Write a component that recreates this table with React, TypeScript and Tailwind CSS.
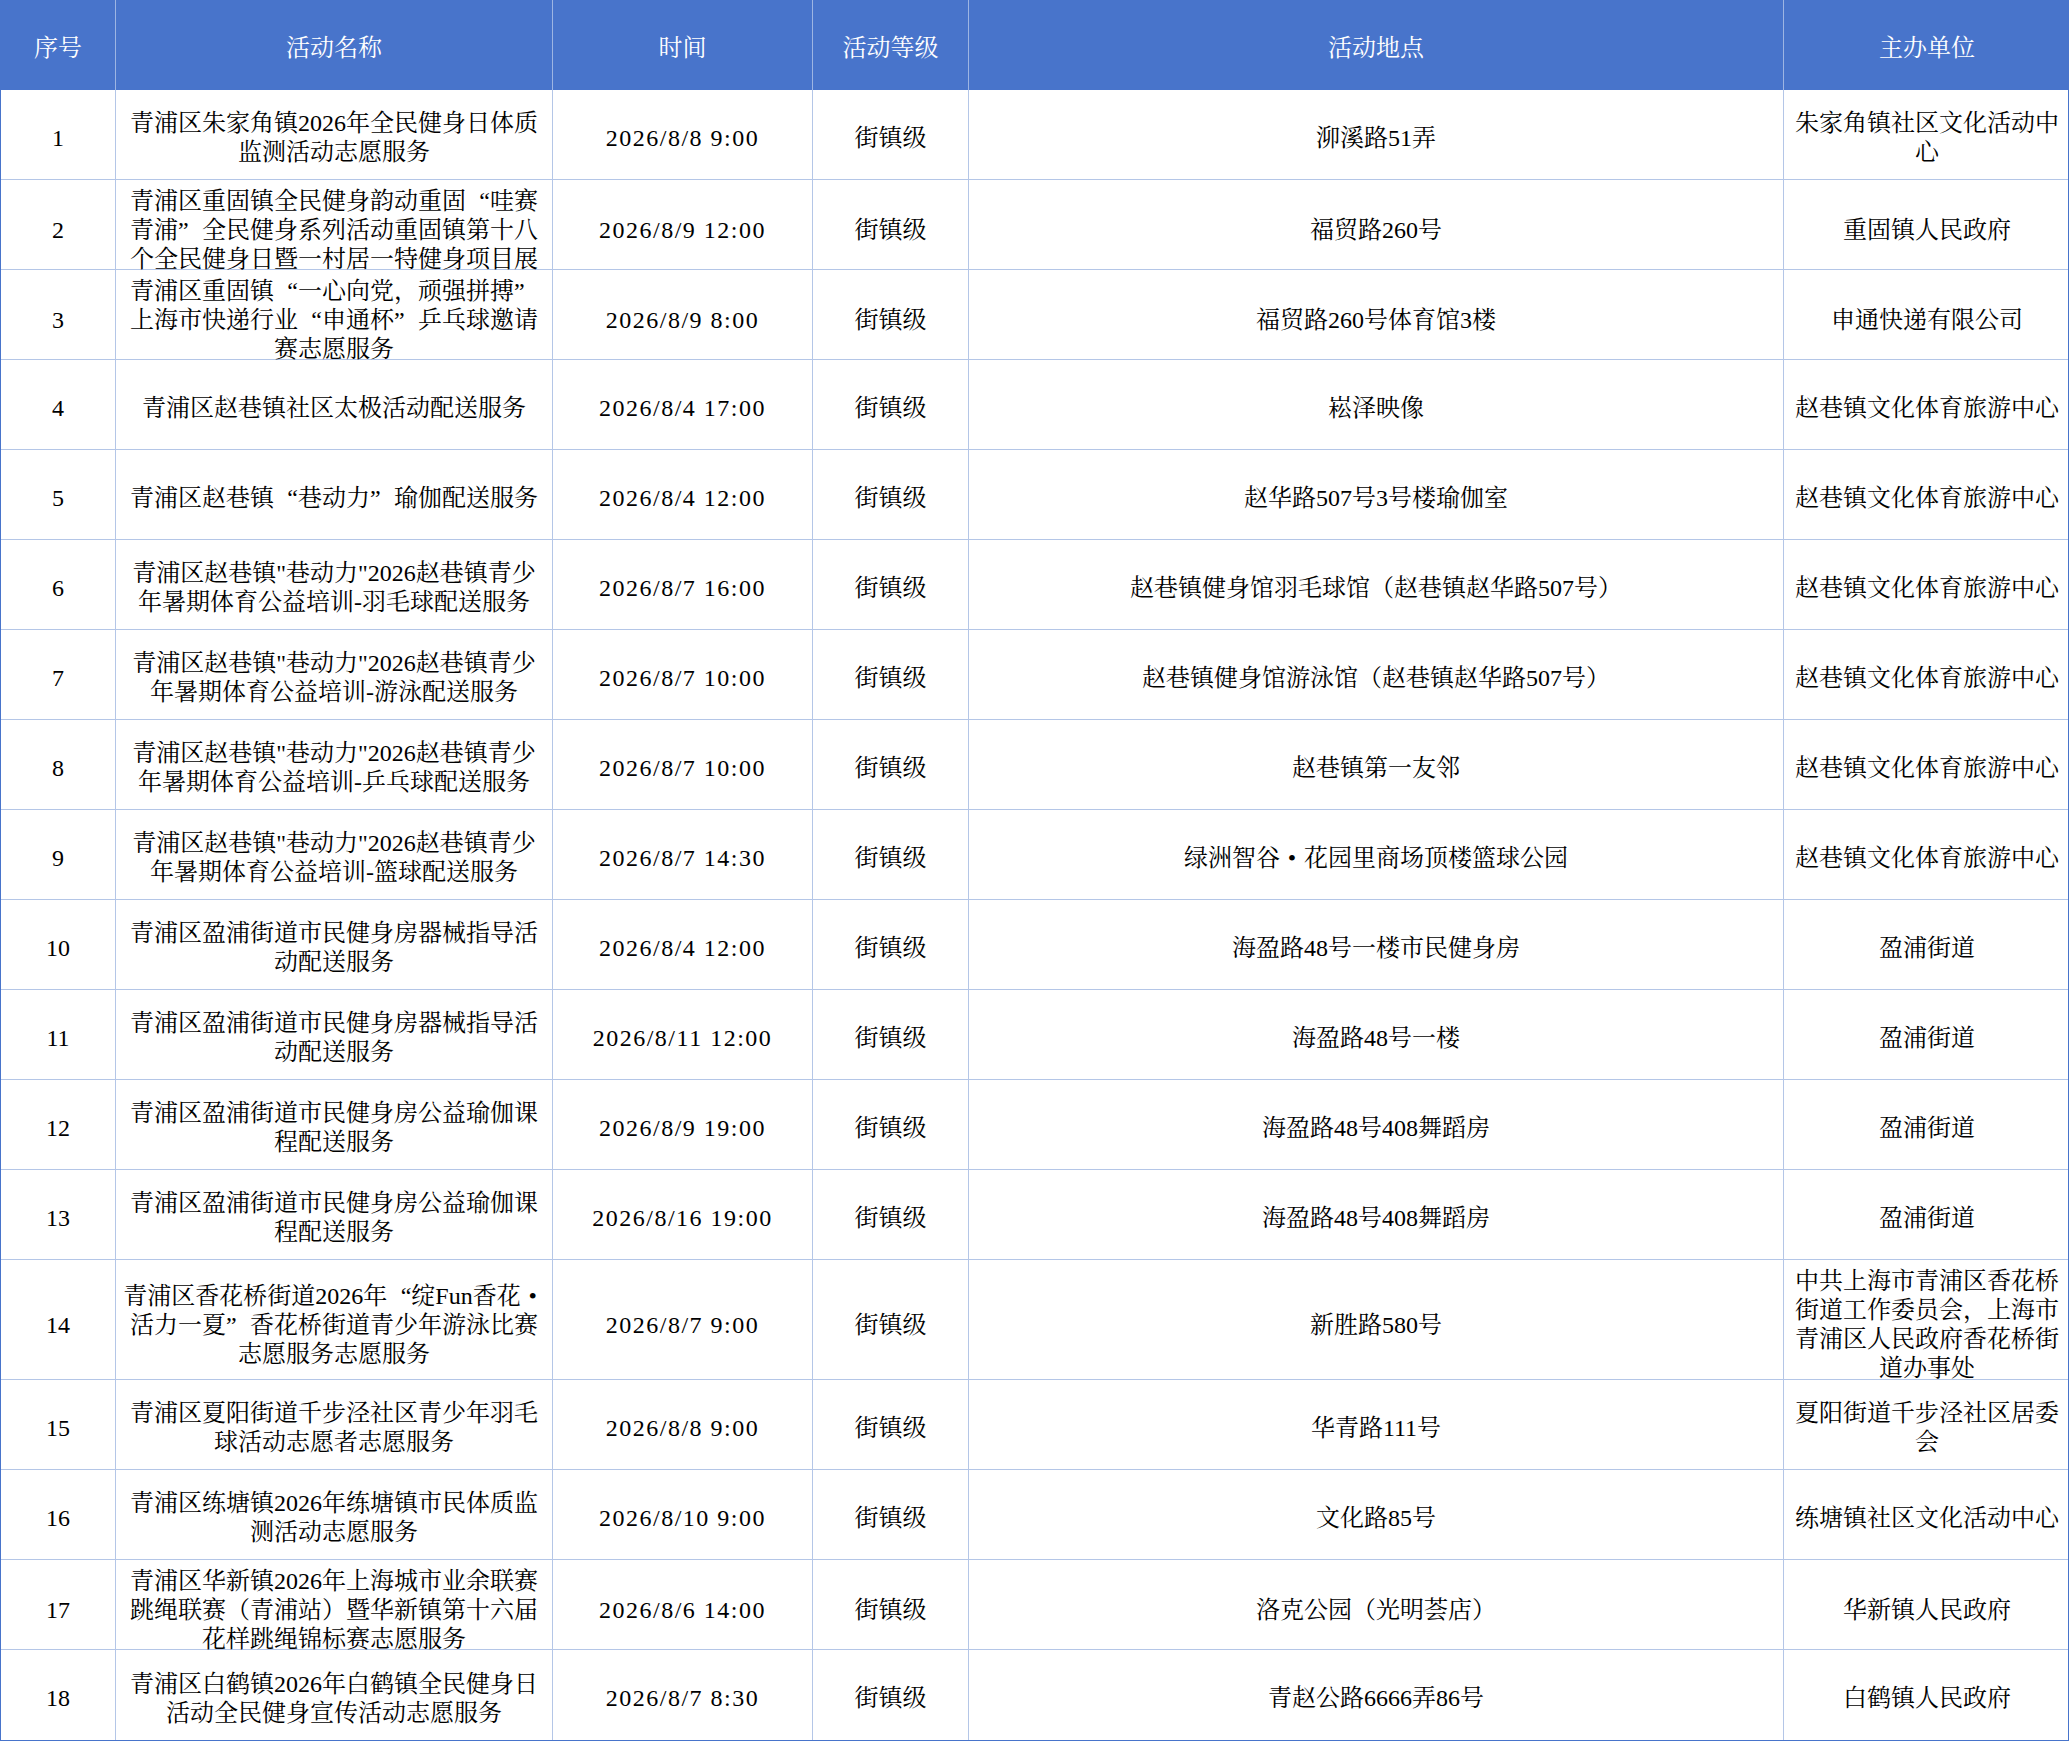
import React from "react";

type Row = {
  no: number;
  name: string[];
  time: string;
  place: string[];
  org: string[];
  tall?: boolean;
};

const rows: Row[] = [
  { no: 1, name: ["青浦区朱家角镇2026年全民健身日体质", "监测活动志愿服务"], time: "2026/8/8 9:00", place: ["泖溪路51弄"], org: ["朱家角镇社区文化活动中", "心"] },
  { no: 2, name: ["青浦区重固镇全民健身韵动重固“哇赛", "青浦”全民健身系列活动重固镇第十八", "个全民健身日暨一村居一特健身项目展"], time: "2026/8/9 12:00", place: ["福贸路260号"], org: ["重固镇人民政府"] },
  { no: 3, name: ["青浦区重固镇“一心向党，顽强拼搏”", "上海市快递行业“申通杯”乒乓球邀请", "赛志愿服务"], time: "2026/8/9 8:00", place: ["福贸路260号体育馆3楼"], org: ["申通快递有限公司"] },
  { no: 4, name: ["青浦区赵巷镇社区太极活动配送服务"], time: "2026/8/4 17:00", place: ["崧泽映像"], org: ["赵巷镇文化体育旅游中心"] },
  { no: 5, name: ["青浦区赵巷镇“巷动力”瑜伽配送服务"], time: "2026/8/4 12:00", place: ["赵华路507号3号楼瑜伽室"], org: ["赵巷镇文化体育旅游中心"] },
  { no: 6, name: ["青浦区赵巷镇\"巷动力\"2026赵巷镇青少", "年暑期体育公益培训-羽毛球配送服务"], time: "2026/8/7 16:00", place: ["赵巷镇健身馆羽毛球馆（赵巷镇赵华路507号）"], org: ["赵巷镇文化体育旅游中心"] },
  { no: 7, name: ["青浦区赵巷镇\"巷动力\"2026赵巷镇青少", "年暑期体育公益培训-游泳配送服务"], time: "2026/8/7 10:00", place: ["赵巷镇健身馆游泳馆（赵巷镇赵华路507号）"], org: ["赵巷镇文化体育旅游中心"] },
  { no: 8, name: ["青浦区赵巷镇\"巷动力\"2026赵巷镇青少", "年暑期体育公益培训-乒乓球配送服务"], time: "2026/8/7 10:00", place: ["赵巷镇第一友邻"], org: ["赵巷镇文化体育旅游中心"] },
  { no: 9, name: ["青浦区赵巷镇\"巷动力\"2026赵巷镇青少", "年暑期体育公益培训-篮球配送服务"], time: "2026/8/7 14:30", place: ["绿洲智谷•花园里商场顶楼篮球公园"], org: ["赵巷镇文化体育旅游中心"] },
  { no: 10, name: ["青浦区盈浦街道市民健身房器械指导活", "动配送服务"], time: "2026/8/4 12:00", place: ["海盈路48号一楼市民健身房"], org: ["盈浦街道"] },
  { no: 11, name: ["青浦区盈浦街道市民健身房器械指导活", "动配送服务"], time: "2026/8/11 12:00", place: ["海盈路48号一楼"], org: ["盈浦街道"] },
  { no: 12, name: ["青浦区盈浦街道市民健身房公益瑜伽课", "程配送服务"], time: "2026/8/9 19:00", place: ["海盈路48号408舞蹈房"], org: ["盈浦街道"] },
  { no: 13, name: ["青浦区盈浦街道市民健身房公益瑜伽课", "程配送服务"], time: "2026/8/16 19:00", place: ["海盈路48号408舞蹈房"], org: ["盈浦街道"] },
  { no: 14, name: ["青浦区香花桥街道2026年“绽Fun香花•", "活力一夏”香花桥街道青少年游泳比赛", "志愿服务志愿服务"], time: "2026/8/7 9:00", place: ["新胜路580号"], org: ["中共上海市青浦区香花桥", "街道工作委员会，上海市", "青浦区人民政府香花桥街", "道办事处"], tall: true },
  { no: 15, name: ["青浦区夏阳街道千步泾社区青少年羽毛", "球活动志愿者志愿服务"], time: "2026/8/8 9:00", place: ["华青路111号"], org: ["夏阳街道千步泾社区居委", "会"] },
  { no: 16, name: ["青浦区练塘镇2026年练塘镇市民体质监", "测活动志愿服务"], time: "2026/8/10 9:00", place: ["文化路85号"], org: ["练塘镇社区文化活动中心"] },
  { no: 17, name: ["青浦区华新镇2026年上海城市业余联赛", "跳绳联赛（青浦站）暨华新镇第十六届", "花样跳绳锦标赛志愿服务"], time: "2026/8/6 14:00", place: ["洛克公园（光明荟店）"], org: ["华新镇人民政府"] },
  { no: 18, name: ["青浦区白鹤镇2026年白鹤镇全民健身日", "活动全民健身宣传活动志愿服务"], time: "2026/8/7 8:30", place: ["青赵公路6666弄86号"], org: ["白鹤镇人民政府"] },
];

const headers = ["序号", "活动名称", "时间", "活动等级", "活动地点", "主办单位"];
const cols = "grid grid-cols-[115px_437px_260px_156px_815px_286px]";

// full-width punctuation like the original sheet font
function Line({ text }: { text: string }) {
  const parts: React.ReactNode[] = [];
  let buf = "";
  const flush = () => {
    if (buf) parts.push(buf);
    buf = "";
  };
  Array.from(text).forEach((ch, i) => {
    if (ch === "“" || ch === "”" || ch === "•") {
      flush();
      const align = ch === "“" ? "text-right" : ch === "”" ? "text-left" : "text-center";
      parts.push(
        <span key={i} className={`inline-block w-[1em] ${align}`}>
          {ch}
        </span>
      );
    } else {
      buf += ch;
    }
  });
  flush();
  return <div className="whitespace-nowrap">{parts}</div>;
}

function Cell({ lines, last, extra }: { lines: string[]; last?: boolean; extra?: string }) {
  return (
    <div
      className={`flex flex-col items-center justify-center pt-[7px] text-center ${
        last ? "" : "border-r border-[#B4C6E7]"
      } ${extra ?? ""}`}
    >
      {lines.map((l, i) => (
        <Line key={i} text={l} />
      ))}
    </div>
  );
}

export default function App() {
  return (
    <div className="min-h-screen bg-white">
      <div className="w-[2069px] border-x border-b border-[#4874CB] font-['Liberation_Serif','Noto_Serif_CJK_SC','Noto_Sans_CJK_SC',serif] text-[24px] leading-[29px] text-black">
        <div className={`${cols} h-[90px] bg-[#4874CB] text-white`}>
          {headers.map((h, i) => (
            <div
              key={h}
              className={`flex items-center justify-center pt-[6px] ${
                i < headers.length - 1 ? "border-r border-[#9DB5E3]" : ""
              }`}
            >
              {h}
            </div>
          ))}
        </div>

        {rows.map((r, idx) => (
          <div
            key={r.no}
            className={`${cols} ${r.tall ? "h-[120px]" : "h-[90px]"} ${
              idx < rows.length - 1 ? "border-b border-[#B4C6E7]" : ""
            }`}
          >
            <Cell lines={[String(r.no)]} />
            <Cell lines={r.name} />
            <Cell lines={[r.time]} extra="tracking-[1.5px]" />
            <Cell lines={["街镇级"]} />
            <Cell lines={r.place} />
            <Cell lines={r.org} last />
          </div>
        ))}
      </div>
    </div>
  );
}
